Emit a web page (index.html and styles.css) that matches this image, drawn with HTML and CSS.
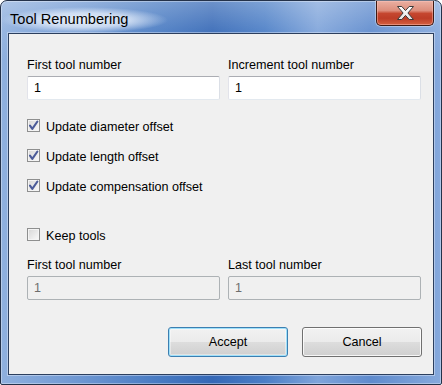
FILE: index.html
```html
<!DOCTYPE html>
<html>
<head>
<meta charset="utf-8">
<title>Tool Renumbering</title>
<link rel="stylesheet" href="styles.css">
</head>
<body>
<div class="window">
  <div class="titlebar">
    <div class="title">Tool Renumbering</div>
    <div class="close">
      <svg width="17" height="14" viewBox="0 0 17 14">
        <defs>
          <linearGradient id="xg" x1="0" y1="0" x2="0" y2="1">
            <stop offset="0" stop-color="#ffffff"/>
            <stop offset="1" stop-color="#e4e4e4"/>
          </linearGradient>
        </defs>
        <polygon points="0.5,0.5 4.8,0.5 8.5,4.6 12.2,0.5 16.5,0.5 10.9,7 16.5,13.5 12.2,13.5 8.5,9.4 4.8,13.5 0.5,13.5 6.1,7" fill="url(#xg)" stroke="#3a3a3a" stroke-width="1" stroke-linejoin="round"/>
      </svg>
    </div>
  </div>
  <div class="client">
    <div class="grid">
      <div class="field">
        <div class="lbl">First tool number</div>
        <div class="input">1</div>
      </div>
      <div class="field">
        <div class="lbl">Increment tool number</div>
        <div class="input">1</div>
      </div>
    </div>

    <div class="checks">
      <div class="check">
        <span class="box"><svg class="tick" width="11" height="11" viewBox="0 0 11 11"><path d="M2 5.6 L4.3 8.8 L9.4 1.5" fill="none" stroke="#4b5b99" stroke-width="2.1" stroke-linecap="round" stroke-linejoin="round"/></svg></span>
        <span class="ctext">Update diameter offset</span>
      </div>
      <div class="check">
        <span class="box"><svg class="tick" width="11" height="11" viewBox="0 0 11 11"><path d="M2 5.6 L4.3 8.8 L9.4 1.5" fill="none" stroke="#4b5b99" stroke-width="2.1" stroke-linecap="round" stroke-linejoin="round"/></svg></span>
        <span class="ctext">Update length offset</span>
      </div>
      <div class="check">
        <span class="box"><svg class="tick" width="11" height="11" viewBox="0 0 11 11"><path d="M2 5.6 L4.3 8.8 L9.4 1.5" fill="none" stroke="#4b5b99" stroke-width="2.1" stroke-linecap="round" stroke-linejoin="round"/></svg></span>
        <span class="ctext">Update compensation offset</span>
      </div>
    </div>

    <div class="check keep">
      <span class="box"></span>
      <span class="ctext">Keep tools</span>
    </div>

    <div class="grid grid2">
      <div class="field">
        <div class="lbl">First tool number</div>
        <div class="input disabled">1</div>
      </div>
      <div class="field">
        <div class="lbl">Last tool number</div>
        <div class="input disabled">1</div>
      </div>
    </div>

    <div class="buttons">
      <div class="btn default">Accept</div>
      <div class="btn">Cancel</div>
    </div>
  </div>
</div>
</body>
</html>
```

FILE: styles.css
```css
* { box-sizing: border-box; }
html, body { margin: 0; padding: 0; }
body {
  width: 442px;
  height: 385px;
  overflow: hidden;
  background: #ffffff;
  font-family: "Liberation Sans", Arial, sans-serif;
  font-size: 12.6px;
  color: #000;
}
.window {
  width: 442px;
  height: 385px;
  border: 1px solid #24324a;
  border-radius: 7px 7px 2px 2px;
  display: flex;
  flex-direction: column;
  padding-bottom: 9px;
  background:
    linear-gradient(180deg, rgba(255,255,255,0.28) 0px, rgba(255,255,255,0.08) 30px, rgba(255,255,255,0) 60px),
    linear-gradient(90deg, #8fb0de 0%, #6e97d2 18%, #4a7cc3 35%, #3568b6 48%, #4b7ec6 60%, #7fa4da 72%, #5f8bcd 84%, #86a9dc 100%);
  box-shadow: inset 0 0 0 1px rgba(255,255,255,0.35);
}
.titlebar {
  height: 32px;
  display: flex;
  align-items: flex-start;
  padding: 0 7px 0 0;
}
.title {
  margin-top: 6px;
  font-size: 14.6px;
  line-height: 20px;
  color: #000;
  padding: 2px 40px 4px 9px;
  background: radial-gradient(closest-side, rgba(235,242,252,0.95) 0%, rgba(228,237,250,0.75) 55%, rgba(200,220,245,0) 100%);
}
.close {
  margin-left: auto;
  width: 58px;
  height: 25px;
  border: 1px solid #3e1a13;
  border-top: none;
  border-radius: 0 0 5px 5px;
  background: linear-gradient(180deg, #eab0a2 0%, #dd8e7c 40%, #c5472f 52%, #bd3d27 72%, #d4603f 100%);
  box-shadow: inset 0 0 0 1px rgba(255,200,190,0.45), 0 0 0 1px rgba(255,255,255,0.35);
  display: flex;
  align-items: center;
  justify-content: center;
  padding-bottom: 1px;
}
.client {
  flex: 1;
  margin: 0 7px;
  background: #f0f0f0;
  border: 1px solid #2c3f5e;
  box-shadow: 0 0 0 1px rgba(230,238,250,0.45);
  padding: 23px 12px 0 18px;
  display: flex;
  flex-direction: column;
}
.grid {
  display: grid;
  grid-template-columns: 1fr 1fr;
  column-gap: 8px;
}
.grid2 { margin-top: 14px; }
.field { display: flex; flex-direction: column; }
.lbl {
  line-height: 17px;
  height: 17px;
  margin-bottom: 2px;
  white-space: nowrap;
}
.input {
  height: 24px;
  background: #ffffff;
  border: 1px solid;
  border-color: #abadb3 #dbdfe6 #e3e9ef #e2e3ea;
  border-radius: 2px;
  padding: 0 0 0 6px;
  line-height: 22px;
}
.input.disabled {
  background: #f0f0f0;
  border-color: #adb2b5;
  color: #6d6d6d;
}
.checks {
  margin-top: 19px;
  display: flex;
  flex-direction: column;
  gap: 15px;
}
.check {
  display: flex;
  align-items: flex-start;
  height: 15px;
  line-height: 15px;
  white-space: nowrap;
}
.ctext { position: relative; top: 1px; }
.keep { margin-top: 34px; }
.box {
  width: 13px;
  height: 13px;
  border: 1px solid #8e8f8f;
  background: linear-gradient(135deg, #d6d6d6 0%, #e8e8e8 50%, #fafafa 100%);
  box-shadow: inset 0 0 0 1px #f4f4f4;
  margin-right: 6px;
  flex: none;
}
.tick { display: block; }
.buttons {
  margin-top: 27px;
  margin-right: -1px;
  display: flex;
  justify-content: flex-end;
  gap: 14px;
}
.btn {
  width: 120px;
  height: 30px;
  border: 1px solid #707070;
  border-radius: 3px;
  background: linear-gradient(180deg, #f2f2f2 0%, #ebebeb 50%, #dddddd 51%, #cfcfcf 100%);
  box-shadow: inset 0 0 0 1px rgba(255,255,255,0.8);
  display: flex;
  align-items: center;
  justify-content: center;
  line-height: 15px;
}
.btn.default {
  border-color: #3c7fb1;
  box-shadow: inset 0 0 0 1px #9fe0fa, inset 0 0 0 2px rgba(255,255,255,0.4);
}
```
